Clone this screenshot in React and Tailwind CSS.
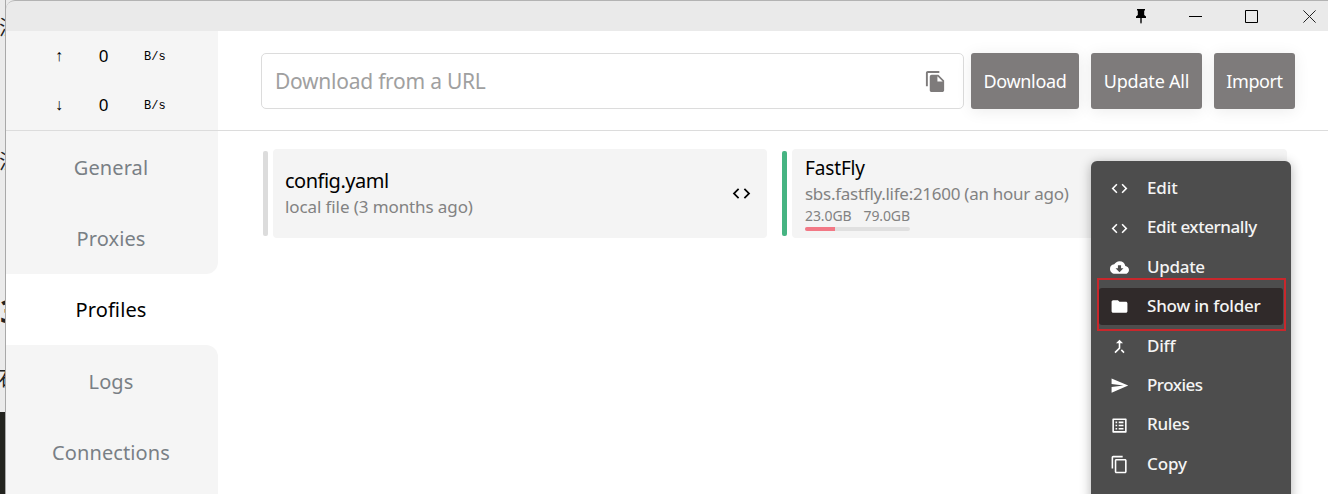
import {
  MdCallMerge,
  MdCloudDownload,
  MdCode,
  MdContentCopy,
  MdFileCopy,
  MdFolder,
  MdListAlt,
  MdSend,
} from 'react-icons/md';

const NAV = [
  { label: 'General', shape: 'bg-[#f5f5f5]', text: 'text-[#797f85]' },
  { label: 'Proxies', shape: 'bg-[#f5f5f5] rounded-br-[12px]', text: 'text-[#797f85]' },
  { label: 'Profiles', shape: 'bg-white', text: 'text-black' },
  { label: 'Logs', shape: 'bg-[#f5f5f5] rounded-tr-[12px]', text: 'text-[#797f85]' },
  { label: 'Connections', shape: 'bg-[#f5f5f5]', text: 'text-[#797f85]' },
];

const MENU = [
  { label: 'Edit', Icon: MdCode, tracking: 'tracking-[-0.1px]' },
  { label: 'Edit externally', Icon: MdCode, tracking: 'tracking-[-0.43px]' },
  { label: 'Update', Icon: MdCloudDownload, tracking: 'tracking-[-0.3px]' },
  { label: 'Show in folder', Icon: MdFolder, active: true, tracking: 'tracking-[-0.2px]' },
  { label: 'Diff', Icon: MdCallMerge, tracking: 'tracking-[-0.2px]' },
  { label: 'Proxies', Icon: MdSend, tracking: 'tracking-[-0.5px]' },
  { label: 'Rules', Icon: MdListAlt, tracking: 'tracking-[-0.3px]' },
  { label: 'Copy', Icon: MdContentCopy, tracking: 'tracking-[-0.1px]' },
];

function Backdrop() {
  return (
    <div className="relative w-[6px] shrink-0 overflow-hidden border-r border-[#a9a9a9] bg-[#ebebeb] text-[#222]">
      <span className="absolute top-[14px] left-[-1px] text-[20px] leading-7">注</span>
      <span className="absolute top-[148px] left-[-1px] text-[20px] leading-7">注</span>
      <span className="absolute top-[291px] left-[0px] text-[32px] leading-10 font-bold">3</span>
      <span className="absolute top-[365px] left-[-2px] text-[20px] leading-7">石</span>
      <div className="absolute top-[412px] left-0 h-[82px] w-[6px] bg-[#23241f]" />
    </div>
  );
}

function TitleBar() {
  return (
    <div className="flex h-[31px] shrink-0 items-center justify-end rounded-tl-[9px] border-t border-[#b3b3b3] bg-[#eaeaea] pr-[12px]">
      <svg width="12" height="15" viewBox="0 0 12 15" className="mr-[42px]">
        <path d="M2 0h8v1.6H9.2V6L11 7.6V9H6.7v4.5L6 15l-.7-1.5V9H1V7.6L2.800 6V1.600H2z" fill="#000" />
      </svg>
      <svg width="13" height="13" viewBox="0 0 13 13" className="mr-[43px]">
        <path d="M0 6.500h13" stroke="#000" />
      </svg>
      <svg width="13" height="13" viewBox="0 0 13 13" className="mr-[45px]">
        <path d="M.5.5h12v12H.5z" stroke="#000" fill="none" />
      </svg>
      <svg width="13" height="13" viewBox="0 0 13 13">
        <path d="M.4.4l12.200 12.200M12.600.4L.4 12.600" stroke="#222" fill="none" />
      </svg>
    </div>
  );
}

function Speed({ arrow }) {
  return (
    <div className="flex h-[49px] items-center pl-[46px]">
      <span className="w-[14px] text-center font-['Liberation_Sans'] text-[16px]">{arrow}</span>
      <span className="ml-[27px] w-[20px] pl-px text-center text-[17px]">0</span>
      <span className="ml-[31px] pt-[3px] font-['Liberation_Mono',monospace] text-[12px]">B/s</span>
    </div>
  );
}

function Button({ children, className }) {
  return (
    <button
      className={`h-[56px] shrink-0 rounded-[3px] bg-[#7e7b7b] text-[18px] text-white shadow-[0_2px_16px_rgba(0,0,0,0.08)] ${className}`}
    >
      {children}
    </button>
  );
}

function ContextMenu() {
  return (
    <div className="absolute top-[161px] left-[1091px] h-[340px] w-[200px] rounded-t-[6px] bg-[#4d4d4d] px-[8px] pt-[8px] shadow-[0_2px_12px_rgba(0,0,0,0.3)]">
      {MENU.map(({ label, Icon, active, tracking }) => (
        <div key={label} className="flex h-[39.400px] items-center">
          <div
            className={`flex h-[37px] w-[184px] items-center rounded-[3px] pl-[11px] text-[17px] font-medium whitespace-nowrap text-[#f4f4f4] ${active ? 'bg-[#302a2a]' : ''}`}
          >
            <Icon className="mr-[18px] size-[19px] shrink-0 text-white" />
            <span className={`pb-[2px] ${tracking}`}>{label}</span>
          </div>
        </div>
      ))}
      <div className="absolute top-[117px] left-[6px] h-[53px] w-[189px] border-2 border-[#c9272c]" />
    </div>
  );
}

export default function App() {
  return (
    <div className="relative flex h-[494px] w-[1328px] overflow-hidden bg-[#ebebeb] font-['Noto_Sans','Noto_Sans_CJK_SC',sans-serif] text-black">
      <Backdrop />
      <div className="flex flex-1 flex-col">
        <TitleBar />
        <div className="flex h-[100px] shrink-0 border-b border-[#dcdcdc] bg-white">
          <div className="w-[212px] shrink-0 bg-[#f5f5f5]">
            <Speed arrow="↑" />
            <Speed arrow="↓" />
          </div>
          <div className="flex flex-1 items-start pt-[22px] pl-[43px]">
            <div className="mr-[7px] flex h-[56px] w-[703px] shrink-0 items-center justify-between rounded-[5px] border border-[#dcdcdc] bg-white pr-[16px] pl-[13px]">
              <span className="pt-[2px] text-[21px] tracking-[-0.25px] text-[#a0a0a0]">Download from a URL</span>
              <MdFileCopy className="size-[23px] text-[#7e7b7b]" />
            </div>
            <Button className="mr-[12px] w-[108px] tracking-[-0.3px]">Download</Button>
            <Button className="mr-[12px] w-[111px] tracking-[-0.2px]">Update All</Button>
            <Button className="w-[81px] tracking-[-0.4px]">Import</Button>
          </div>
        </div>
        <div className="flex flex-1 bg-white">
          <nav className="flex w-[212px] shrink-0 flex-col">
            {NAV.map(({ label, shape, text }) => (
              <div
                key={label}
                className={`flex h-[71.400px] shrink-0 items-center justify-center pt-[2px] pr-[2px] text-[20px] tracking-[0.1px] ${shape} ${text}`}
              >
                {label}
              </div>
            ))}
            <div className="flex-1 bg-[#f5f5f5]" />
          </nav>
          <main className="flex flex-1 items-start pt-[18px] pl-[45px]">
            <div className="mt-[2px] h-[85px] w-[5px] shrink-0 rounded-[2px] bg-[#dcdcdc]" />
            <div className="ml-[5px] flex h-[89px] w-[494px] shrink-0 items-center justify-between rounded-[4px] bg-[#f4f4f4] pr-[15px] pl-[12px]">
              <div>
                <div className="text-[20px] leading-[27px] tracking-[-0.5px]">config.yaml</div>
                <div className="text-[17px] leading-[26px] tracking-[-0.1px] text-[#828282]">local file (3 months ago)</div>
              </div>
              <MdCode className="size-[21px]" />
            </div>
            <div className="mt-[2px] ml-[15px] h-[85px] w-[5px] shrink-0 rounded-[2px] bg-[#46b482]" />
            <div className="ml-[5px] h-[89px] w-[495px] shrink-0 rounded-[4px] bg-[#f4f4f4] pt-[6px] pl-[13px]">
              <div className="text-[19px] leading-[26px] tracking-[-0.15px]">FastFly</div>
              <div className="text-[17px] leading-[25px] tracking-[-0.27px] text-[#828282]">sbs.fastfly.life:21600 (an hour ago)</div>
              <div className="flex gap-[12px] text-[14px] leading-[19px] tracking-[-0.1px] text-[#828282]">
                <span>23.0GB</span>
                <span>79.0GB</span>
              </div>
              <div className="mt-[2px] h-[4px] w-[105px] overflow-hidden rounded-full bg-[#e0e0e0]">
                <div className="h-full w-[30px] bg-[#f27885]" />
              </div>
            </div>
          </main>
        </div>
      </div>
      <ContextMenu />
    </div>
  );
}
